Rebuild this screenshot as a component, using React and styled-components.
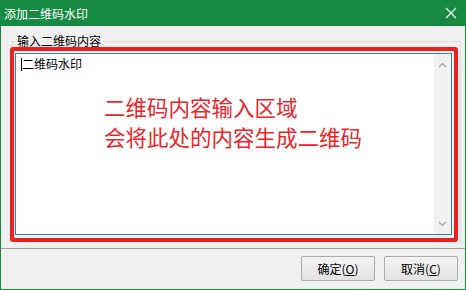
import React from "react";
import styled, { createGlobalStyle } from "styled-components";

const GlobalStyle = createGlobalStyle`
  html, body {
    margin: 0;
    padding: 0;
    background: #ffffff;
  }
  body {
    font-family: "Noto Sans CJK SC", "Noto Sans", sans-serif;
    font-size: 12px;
  }
`;

const Window = styled.div`
  width: 466px;
  height: 290px;
  box-sizing: border-box;
  display: flex;
  flex-direction: column;
  border: 1px solid #1a8a42;
  border-top: none;
  background: #f0f0f0;
`;

const TitleBar = styled.div`
  height: 26px;
  margin: 0 -1px;
  display: flex;
  align-items: center;
  justify-content: space-between;
  padding: 0 9px 0 4px;
  background: #168a40;
  color: #ffffff;
  font-size: 12px;
  flex: 0 0 auto;
`;

const CloseButton = styled.div`
  display: flex;
  align-items: center;
  justify-content: center;
  width: 12px;
  height: 12px;
`;

const Body = styled.div`
  flex: 1;
  display: flex;
  flex-direction: column;
  padding: 7px 4px 0 11px;
`;

const GroupBox = styled.fieldset`
  margin: 0;
  padding: 0;
  min-width: 0;
  border: 1px solid #dcdcdc;
  border-bottom: none;
`;

const GroupLabel = styled.legend`
  margin-left: 2px;
  padding: 0 2px;
  font-size: 12px;
  line-height: 16px;
  color: #000000;
`;

const Highlight = styled.div`
  margin: -2px 2px 0 -3px;
  border: 4px solid #e8231f;
  border-radius: 3px;
  padding: 2px 2px 3px 1px;
`;

const TextBox = styled.div`
  height: 182px;
  box-sizing: border-box;
  border: 1px solid #3a7fb8;
  background: #ffffff;
  display: flex;
`;

const TextContent = styled.div`
  flex: 1;
  padding: 2px 0 0 5px;
`;

const TextLine = styled.div`
  display: flex;
  align-items: center;
  font-size: 12px;
  line-height: 16px;
  color: #000000;
`;

const Caret = styled.span`
  width: 1px;
  height: 13px;
  background: #000000;
`;

const Annotation = styled.div`
  margin: 20px 0 0 83px;
  color: #e8262b;
  font-size: 21.5px;
  line-height: 30px;
`;

const ScrollBar = styled.div`
  width: 17px;
  display: flex;
  flex-direction: column;
  justify-content: space-between;
  align-items: center;
  background: #f0f0f0;
  padding: 8px 0 7px;
`;

const Separator = styled.div`
  height: 1px;
  background: #a0a0a0;
  flex: 0 0 auto;
`;

const Footer = styled.div`
  height: 40px;
  display: flex;
  justify-content: flex-end;
  align-items: flex-start;
  gap: 9px;
  padding: 7px 7px 0 0;
  box-sizing: border-box;
  flex: 0 0 auto;
`;

const Button = styled.button`
  width: 74px;
  height: 25px;
  border: 1px solid #acacac;
  border-radius: 2px;
  background: linear-gradient(#f3f3f3, #e3e3e3);
  font-family: "Noto Sans CJK SC", "Noto Sans", sans-serif;
  font-size: 12px;
  color: #000000;
  padding: 0;
  u {
    text-decoration: underline;
  }
`;

const Chevron = ({ up }) => (
  <svg width="9" height="6" viewBox="0 0 9 6">
    <path
      d={up ? "M1 5 L4.5 1.5 L8 5" : "M1 1 L4.5 4.5 L8 1"}
      fill="none"
      stroke="#a6a6a6"
      strokeWidth="1.2"
    />
  </svg>
);

export default function App() {
  return (
    <>
      <GlobalStyle />
      <Window>
        <TitleBar>
          <span>添加二维码水印</span>
          <CloseButton>
            <svg width="12" height="12" viewBox="0 0 12 12">
              <path d="M1 1 L11 11 M11 1 L1 11" stroke="#ffffff" strokeWidth="1.1" />
            </svg>
          </CloseButton>
        </TitleBar>
        <Body>
          <GroupBox>
            <GroupLabel>输入二维码内容</GroupLabel>
            <Highlight>
              <TextBox>
                <TextContent>
                  <TextLine>
                    <Caret />
                    二维码水印
                  </TextLine>
                  <Annotation>
                    二维码内容输入区域
                    <br />
                    会将此处的内容生成二维码
                  </Annotation>
                </TextContent>
                <ScrollBar>
                  <Chevron up />
                  <Chevron />
                </ScrollBar>
              </TextBox>
            </Highlight>
          </GroupBox>
        </Body>
        <Separator />
        <Footer>
          <Button>
            确定(<u>O</u>)
          </Button>
          <Button>
            取消(<u>C</u>)
          </Button>
        </Footer>
      </Window>
    </>
  );
}
